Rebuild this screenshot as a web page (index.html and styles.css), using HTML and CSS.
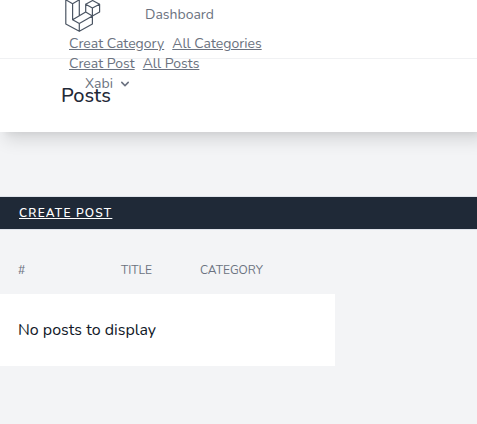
FILE: index.html
```html
<!DOCTYPE html>
<html lang="en">
<head>
<meta charset="utf-8">
<meta name="viewport" content="width=device-width, initial-scale=1">
<title>Posts</title>
<link rel="stylesheet" href="styles.css">
</head>
<body>
<nav class="nav">
  <div class="nav-top">
    <a class="logo" href="#" aria-label="Home">
      <svg width="36" height="32" viewBox="0 0 36 32" fill="none" stroke="currentColor" stroke-width="1.2" stroke-linejoin="round" stroke-linecap="round">
        <path d="M.8-.2V24L14.3 31.3 27.4 24V16L34.6 12V4.2L27.6.5 20.7 4.2V12L14.3 15.8V-.2L7.6 3.8.8-.2M7.6 3.8V19.8L14.3 23.5V31.3M7.6 19.8L20.7 12 27.4 16 14.3 23.5M20.7 4.2L27.4 8V16M27.4 8L34.6 4.2"/>
      </svg>
    </a>
    <a class="nav-link" href="#">Dashboard</a>
  </div>
  <div class="nav-row"><a href="#">Creat Category</a><a href="#">All Categories</a></div>
  <div class="nav-row"><a href="#">Creat Post</a><a href="#">All Posts</a></div>
  <button class="user" type="button">Xabi
    <svg width="16" height="16" viewBox="0 0 20 20" fill="currentColor" aria-hidden="true"><path fill-rule="evenodd" d="M5.293 7.293a1 1 0 011.414 0L10 10.586l3.293-3.293a1 1 0 111.414 1.414l-4 4a1 1 0 01-1.414 0l-4-4a1 1 0 010-1.414z"/></svg>
  </button>
</nav>
<header class="header"><h2>Posts</h2></header>
<main class="main">
  <div class="bar"><a href="#">Create Post</a></div>
  <table class="posts">
    <thead>
      <tr><th class="col-id">#</th><th class="col-title">Title</th><th>Category</th></tr>
    </thead>
    <tbody>
      <tr><td colspan="3">No posts to display</td></tr>
    </tbody>
  </table>
</main>
</body>
</html>
```
FILE: styles.css
```css
* {
  box-sizing: border-box;
}

body {
  margin: 0;
  min-height: 100vh;
  background: #f3f4f6;
  color: #1f2937;
  font-family: Nunito, Lato, sans-serif;
  font-size: 16px;
  line-height: 24px;
}

/* The menu is taller than the bar and spills over the header below. */
.nav {
  position: relative;
  z-index: 1;
  height: 59px;
  padding-left: 65px;
  background: #fff;
  border-bottom: 1px solid #f0f1f3;
  color: #6b7280;
  font-size: 14px;
  line-height: 20px;
}

.nav a {
  color: inherit;
}

.nav-top {
  display: flex;
  height: 34px;
  gap: 44px;
}

.logo {
  height: 32px;
}

.logo svg {
  display: block;
  color: #4b5563;
}

.nav-link {
  padding-top: 5px;
  text-decoration: none;
}

.nav-row {
  display: flex;
  gap: 8px;
  padding-left: 4px;
}

.user {
  display: flex;
  align-items: center;
  gap: 4px;
  margin: 0;
  padding: 0 0 0 20px;
  border: 0;
  background: none;
  color: inherit;
  font: inherit;
}

.header {
  padding: 24px 61px;
  background: #fff;
  box-shadow: 7px 6px 16px 2px rgba(0, 0, 0, 0.12), 4px 4px 6px -2px rgba(0, 0, 0, 0.05);
}

.header h2 {
  margin: 0;
  font-size: 20px;
  font-weight: 500;
  line-height: 25px;
}

.main {
  padding-top: 64px;
}

.bar {
  display: flex;
  padding: 8px 19px;
  background: #1f2937;
  background-clip: padding-box;
  border: 1px solid #dfe3ea;
  border-width: 1px 0;
  line-height: 16px;
}

.bar a {
  color: #fff;
  font-size: 12px;
  font-weight: 600;
  letter-spacing: 0.1em;
  text-transform: uppercase;
}

.posts {
  width: 335px;
  max-width: 100%;
  margin-top: 16px;
  border-collapse: collapse;
  text-align: left;
}

.posts th {
  padding: 16px 18px;
  color: #6b7280;
  font-size: 12px;
  font-weight: 400;
  line-height: 16px;
  text-transform: uppercase;
}

.posts .col-id {
  width: 103px;
}

.posts .col-title {
  width: 79px;
}

.posts td {
  padding: 24px 18px;
  background: #fff;
  color: #111827;
}
```
